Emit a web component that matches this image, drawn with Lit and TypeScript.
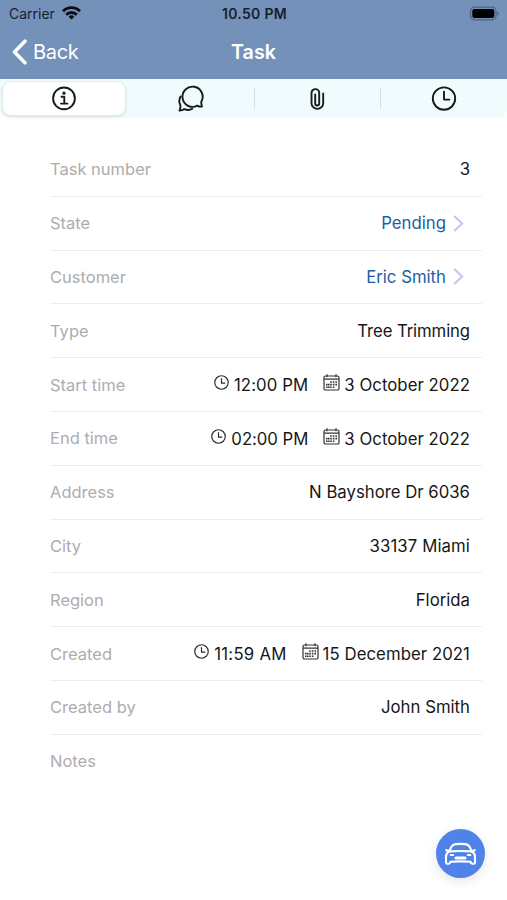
import { LitElement, html, css, svg, nothing } from "lit";
import { customElement, property } from "lit/decorators.js";
import { styleMap } from "lit/directives/style-map.js";

const clock = svg`<circle cx="12" cy="12" r="10.8"/><path d="M12 5v8h6"/>`;

interface Row {
  label: string;
  value?: string;
  time?: string;
  link?: boolean;
  tracking?: number;
  timeTracking?: number;
}

const rows: Row[] = [
  { label: "Task number", value: "3" },
  { label: "State", value: "Pending", link: true },
  { label: "Customer", value: "Eric Smith", link: true },
  { label: "Type", value: "Tree Trimming", tracking: -0.12 },
  { label: "Start time", time: "12:00 PM", value: "3 October 2022", tracking: 0.05, timeTracking: 0.1 },
  { label: "End time", time: "02:00 PM", value: "3 October 2022", tracking: 0.05, timeTracking: -0.05 },
  { label: "Address", value: "N Bayshore Dr 6036" },
  { label: "City", value: "33137 Miami", tracking: 0.1 },
  { label: "Region", value: "Florida" },
  { label: "Created", time: "11:59 AM", value: "15 December 2021", tracking: 0.06, timeTracking: 0.25 },
  { label: "Created by", value: "John Smith" },
  { label: "Notes" },
];

@customElement("task-row")
class TaskRow extends LitElement {
  @property({ attribute: false }) row!: Row;

  static styles = css`
    :host {
      display: flex;
      box-sizing: border-box;
      height: 53.8px;
      align-items: center;
      justify-content: space-between;
      padding: 0 12px 0 0;
      border-bottom: 1.5px solid #ededee;
      font-size: 16.75px;
      line-height: 20px;
      white-space: nowrap;
    }
    :host(:last-child) { border-bottom-color: transparent; }
    .label { color: #adadad; font-size: 16.5px; }
    .value { display: flex; align-items: center; color: #161616; }
    .link { color: #1c60a3; padding-right: 6px; }
    .chevron { width: 11px; height: 17px; margin-left: 7px; fill: none; stroke: #c5c1f3; stroke-width: 2; }
    .icon { width: 15px; height: 15px; margin: -5px 5px 0 0; fill: none; stroke: #2b2b2b; stroke-width: 1.9; }
    .date { width: 17px; height: 17px; margin: -5px 4px 0 15px; fill: none; stroke: #333; stroke-width: 1.2; }
    .solid { fill: #333; stroke: none; }
    .stamp { position: relative; top: 0.5px; }
  `;

  render() {
    const r = this.row;
    const spacing = (n = 0) => styleMap({ letterSpacing: `${n}px` });
    return html`
      <span class="label">${r.label}</span>
      <span class="value ${r.link ? "link" : ""} ${r.time ? "stamp" : ""}">
        ${r.time
          ? html`<svg class="icon" viewBox="0 0 24 24">${clock}</svg><span style=${spacing(r.timeTracking)}>${r.time}</span>
              <svg class="date" viewBox="0 0 17 17">
                <rect x="1" y="2" width="15" height="14" rx="1.6"/>
                <path d="M1 5.2h15M4 .3v3M13 .3v3"/>
                <path class="solid" d="M7.2 7.2h1.6v1.6H7.2zM9.8 7.2h1.6v1.6H9.8zM12.4 7.2h1.6v1.6h-1.6zM3 9.8h1.6v1.6H3zM5 9.8h1.6v1.6H5zM7.2 9.8h1.6v1.6H7.2zM9.8 9.8h1.6v1.6H9.8zM12.4 9.8h1.6v1.6h-1.6zM3 12.4h1.6V14H3zM5 12.4h1.6V14H5zM7.2 12.4h1.6V14H7.2zM9.8 12.4h1.6V14H9.8z"/>
              </svg>`
          : nothing}
        <span style=${spacing(r.tracking)}>${r.value ?? ""}</span>
        ${r.link ? html`<svg class="chevron" viewBox="0 0 11 17"><path d="M1.2 1l8 7.5-8 7.5"/></svg>` : nothing}
      </span>
    `;
  }
}

@customElement("app-root")
class AppRoot extends LitElement {
  static styles = css`
    :host {
      display: block;
      position: relative;
      height: 900px;
      overflow: hidden;
      background: #fff;
      font-family: Inter, "Liberation Sans", sans-serif;
    }
    .header { height: 79px; box-sizing: border-box; background: #7492b9; }
    .status, .nav { display: grid; grid-template-columns: 1fr auto 1fr; align-items: center; }
    .status { height: 27px; padding: 0 7px 0 9px; font-size: 14px; color: #182030; }
    .carrier { display: flex; align-items: center; gap: 7px; }
    .wifi { width: 19px; height: 14px; margin-top: -1px; fill: none; stroke: #0a0d12; stroke-width: 2.8; }
    .wifi .dot { fill: #0a0d12; stroke: none; }
    .clock { font-weight: 600; font-size: 14px; letter-spacing: 0.3px; }
    .battery { justify-self: end; width: 31px; height: 15px; }
    .nav { height: 50px; padding: 0 12px; color: #fff; }
    .back { display: flex; align-items: center; gap: 6px; font-size: 20px; letter-spacing: -0.3px; }
    .back svg { width: 15px; height: 26px; fill: none; stroke: #fff; stroke-width: 3.5; stroke-linecap: round; stroke-linejoin: round; }
    .title { font-size: 19.7px; font-weight: 600; }
    .tabs { display: grid; grid-template-columns: repeat(4, 1fr); height: 39px; background: #f0fbfd; border-radius: 0 0 9px 9px; }
    .tab { position: relative; display: flex; align-items: center; justify-content: center; }
    .tab svg { width: 26px; height: 26px; overflow: visible; fill: none; stroke: #171b1c; stroke-width: 1.9; stroke-linecap: round; stroke-linejoin: round; }
    .divided::before { content: ""; position: absolute; left: 0; top: 9px; width: 1px; height: 21px; background: #d5dfe2; }
    .active { margin: 2px 1px 2px 2px; box-sizing: border-box; background: #fff; border-radius: 9px; border: 1px solid #e1ecee; box-shadow: 0 1px 3px #0000001c; }
    .list { padding: 25px 25px 0 50px; }
    .fab { position: absolute; left: 436px; top: 829px; width: 49px; height: 49px; display: flex; align-items: center; justify-content: center; border-radius: 50%; background: #5083ea; box-shadow: 0 3px 12px #0000001c; }
    .fab svg { width: 33px; height: 24px; fill: none; stroke: #fff; stroke-width: 2.1; stroke-linejoin: round; stroke-linecap: round; }
  `;

  render() {
    return html`
      <div class="header">
        <div class="status">
          <span class="carrier">Carrier
            <svg class="wifi" viewBox="0 0 19 14">
              <path d="M1 5.2a12 12 0 0 1 17 0M4.2 8.7a7.5 7.5 0 0 1 10.6 0"/>
              <path class="dot" d="M9.5 13.6L6.6 10.7a4.1 4.1 0 0 1 5.8 0z"/>
            </svg>
          </span>
          <span class="clock">10.50 PM</span>
          <svg class="battery" viewBox="0 0 31 15">
            <rect x="1.5" y="1.2" width="25.5" height="12.6" rx="3.8" fill="none" stroke="#4d6380" stroke-width="1.2"/>
            <rect x="3.3" y="3" width="22" height="9" rx="2" fill="#000"/>
            <path d="M28.3 5.2q3.2 2.3 0 4.6z" fill="#4d6380"/>
          </svg>
        </div>
        <div class="nav">
          <span class="back"><svg viewBox="0 0 15 26"><path d="M13 2.2L2.5 13 13 23.8"/></svg>Back</span>
          <span class="title">Task</span>
        </div>
      </div>
      <div class="tabs">
        <div class="tab active">
          <svg viewBox="0 0.6 26 26"><circle cx="13" cy="13" r="10.9"/><path d="M10.5 11.3H13.3V18M10 18.2h6.4"/><circle cx="13" cy="7.8" r=".7" fill="#171b1c"/></svg>
        </div>
        <div class="tab">
          <svg viewBox="-1 0 26 26"><path d="M23.3 15.8A10.1 10.1 0 1 0 19.4 19.6Q21.4 21 24 20.5Q23 18.4 23.3 15.8Z"/><path d="M2.6 10.6Q0 15 2.4 19.3Q2.7 22 1.5 24.6Q4.4 24.6 6.4 23.1Q10.7 25 14.3 22.8"/></svg>
        </div>
        <div class="tab divided">
          <svg viewBox="0 0 26 26"><path d="M19.2 7.4V17A5.85 5.85 0 0 1 7.5 17V7A3.85 3.85 0 0 1 15.2 7V17.5A2 2 0 0 1 11.2 17.5V8.5"/></svg>
        </div>
        <div class="tab divided">
          <svg viewBox="0 0.4 26 26"><circle cx="13" cy="13" r="11.2"/><path d="M13 6V14h5.5"/></svg>
        </div>
      </div>
      <div class="list">${rows.map((r) => html`<task-row .row=${r}></task-row>`)}</div>
      <div class="fab">
        <svg viewBox="0 0 33 24">
          <path d="M5 9.4L7.6 4.6Q9 2.3 12 2.1Q16.5 1.7 21 2.1Q24 2.3 25.4 4.6L28 9.4"/>
          <path d="M2.2 8.2L4.6 9M30.8 8.2L28.4 9"/>
          <path d="M5 9.4Q16.5 8.6 28 9.4Q31 11.4 31 14.4V20.6Q31 21.8 29.8 21.8H28.2Q27 21.8 26.6 19.8Q16.5 19 6.4 19.8Q6 21.8 4.8 21.8H3.2Q2 21.8 2 20.6V14.4Q2 11.4 5 9.4Z"/>
          <path d="M6.6 12.9h2.6M26.4 12.9h-2.6" stroke-width="2"/>
          <path d="M12 15.9h9" stroke-width="3"/>
        </svg>
      </div>
    `;
  }
}
